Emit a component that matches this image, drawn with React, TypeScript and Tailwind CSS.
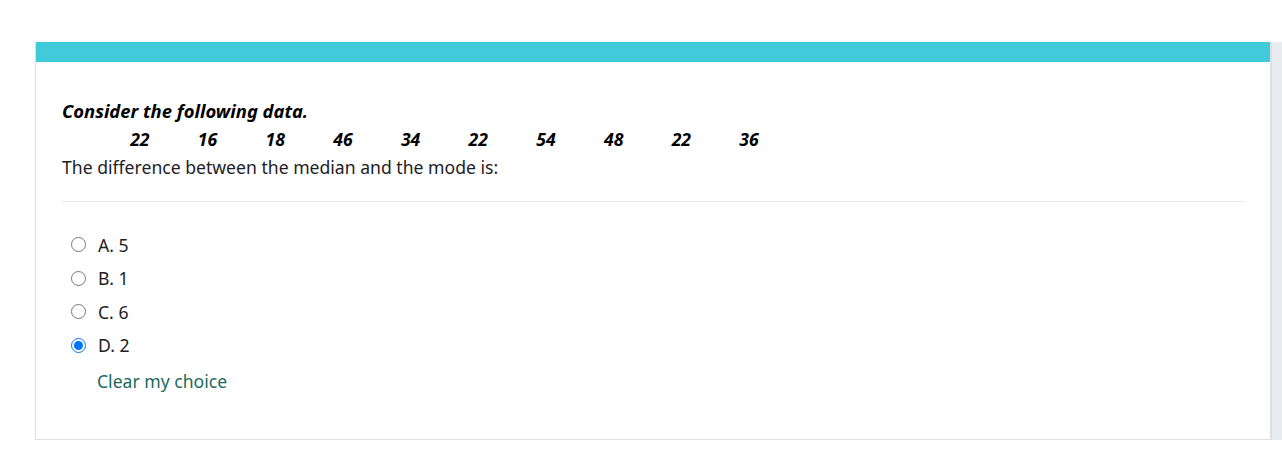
import { useState } from "react";

const numbers = ["22", "16", "18", "46", "34", "22", "54", "48", "22", "36"];
const options = [
  { key: "a", label: "A. 5" },
  { key: "b", label: "B. 1" },
  { key: "c", label: "C. 6" },
  { key: "d", label: "D. 2" },
];

export default function App() {
  const [choice, setChoice] = useState<string | null>("d");

  return (
    <div
      className="min-h-[451px] bg-white pt-[42px] text-[#1d2125]"
      style={{ fontFamily: '"Noto Sans", "Open Sans", sans-serif' }}
    >
      <div className="flex">
        <div className="ml-[35px] w-[1236px] border border-t-0 border-[#dee2e6] bg-white">
          <div className="h-[20px] bg-[#41cad9]" />
          <div className="px-[26px] pt-[35px] pb-[47px] pr-[24px]">
            <div className="text-[17.6px] leading-[28px] text-black">
              <p className="text-[18.4px] font-bold italic">Consider the following data.</p>
              <div className="flex pl-[44px] text-[17.6px] font-bold italic">
                {numbers.map((n, i) => (
                  <span key={i} className="w-[67.7px] shrink-0 text-center">
                    {n}
                  </span>
                ))}
              </div>
              <p className="text-[#1d2125]">The difference between the median and the mode is:</p>
            </div>
            <div className="mt-[20px] border-t border-[#e9ecef]" />
            <div className="mt-[26px] text-[17.6px]">
              {options.map((o) => (
                <label key={o.key} className="flex h-[33.5px] items-center pl-[9px]">
                  <input
                    type="radio"
                    name="answer"
                    className="m-0 h-[15px] w-[15px]"
                    checked={choice === o.key}
                    onChange={() => setChoice(o.key)}
                  />
                  <span className="ml-[12px]">{o.label}</span>
                </label>
              ))}
              <button
                type="button"
                className="ml-[35px] mt-[8px] block text-[17.6px] leading-[22px] text-[#1a6b5c]"
                onClick={() => setChoice(null)}
              >
                Clear my choice
              </button>
            </div>
          </div>
        </div>
        <div className="w-[11px] border-l border-[#dadde1] bg-[#e9ecef]" />
      </div>
    </div>
  );
}
